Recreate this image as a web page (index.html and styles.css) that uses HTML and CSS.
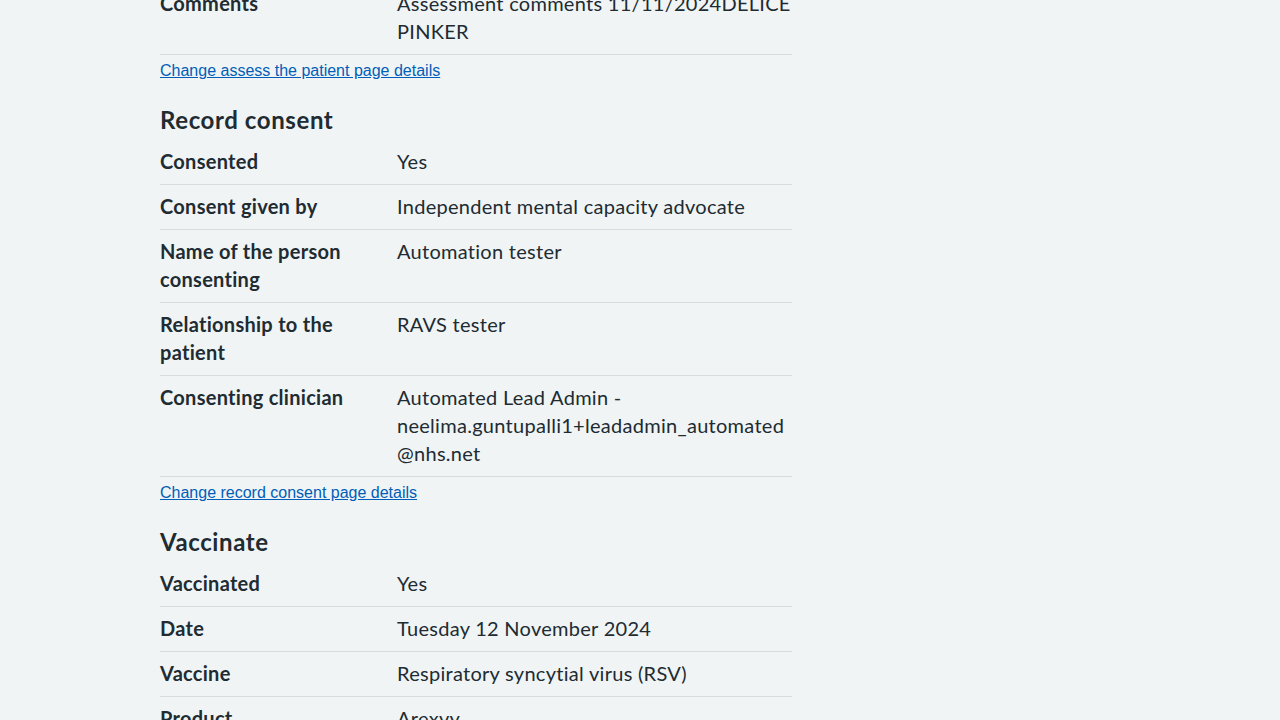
FILE: index.html
```html
<!DOCTYPE html>
<html lang="en">
<head>
<meta charset="utf-8">
<title>Check and confirm</title>
<link rel="stylesheet" href="styles.css">
</head>
<body>
<div class="width-container">
  <main class="column">
    <dl class="summary">
      <div class="row">
        <dt class="key">Comments</dt>
        <dd class="value">Assessment comments 11/11/2024DELICE PINKER</dd>
      </div>
    </dl>
    <p class="change"><a href="#">Change assess the patient page details</a></p>

    <h2 class="heading">Record consent</h2>
    <dl class="summary">
      <div class="row">
        <dt class="key">Consented</dt>
        <dd class="value">Yes</dd>
      </div>
      <div class="row">
        <dt class="key">Consent given by</dt>
        <dd class="value">Independent mental capacity advocate</dd>
      </div>
      <div class="row">
        <dt class="key">Name of the person consenting</dt>
        <dd class="value">Automation tester</dd>
      </div>
      <div class="row">
        <dt class="key">Relationship to the patient</dt>
        <dd class="value">RAVS tester</dd>
      </div>
      <div class="row">
        <dt class="key">Consenting clinician</dt>
        <dd class="value">Automated Lead Admin - neelima.guntupalli1+leadadmin_automated@nhs.net</dd>
      </div>
    </dl>
    <p class="change"><a href="#">Change record consent page details</a></p>

    <h2 class="heading">Vaccinate</h2>
    <dl class="summary">
      <div class="row">
        <dt class="key">Vaccinated</dt>
        <dd class="value">Yes</dd>
      </div>
      <div class="row">
        <dt class="key">Date</dt>
        <dd class="value">Tuesday 12 November 2024</dd>
      </div>
      <div class="row">
        <dt class="key">Vaccine</dt>
        <dd class="value">Respiratory syncytial virus (RSV)</dd>
      </div>
      <div class="row">
        <dt class="key">Product</dt>
        <dd class="value">Arexvy</dd>
      </div>
      <div class="row">
        <dt class="key">Batch number</dt>
        <dd class="value">RSV-AUTO-01</dd>
      </div>
    </dl>
  </main>
</div>
</body>
</html>
```

FILE: styles.css
```css
html, body {
  margin: 0;
  padding: 0;
  background: #f0f4f5;
}

body {
  color: #212b32;
  font-family: "Lato", "Noto Sans", sans-serif;
  font-size: 20px;
  line-height: 28px;
  font-variant-ligatures: none;
}

.width-container {
  width: 960px;
  margin: 0 auto;
}

.column {
  width: 632px;
  margin-top: -18px;
}

.summary {
  margin: 0;
  padding: 0;
}

.row {
  display: grid;
  grid-template-columns: 237px 1fr;
  border-bottom: 1px solid #d8dde0;
}

.key,
.value {
  margin: 0;
  padding: 7px 24px 9px 0;
  letter-spacing: 0.28px;
}

.key {
  font-weight: 700;
}

.value {
  padding-right: 0;
  overflow-wrap: anywhere;
}

.change {
  margin: 4px 0 0;
  font-family: "Liberation Sans", Arial, sans-serif;
  font-size: 16px;
  line-height: 24px;
}

.change a {
  color: #005eb8;
  text-decoration: underline;
}

.heading {
  margin: 21px 0 4px;
  font-size: 24px;
  line-height: 32px;
  font-weight: 700;
  letter-spacing: 0.6px;
}
```
